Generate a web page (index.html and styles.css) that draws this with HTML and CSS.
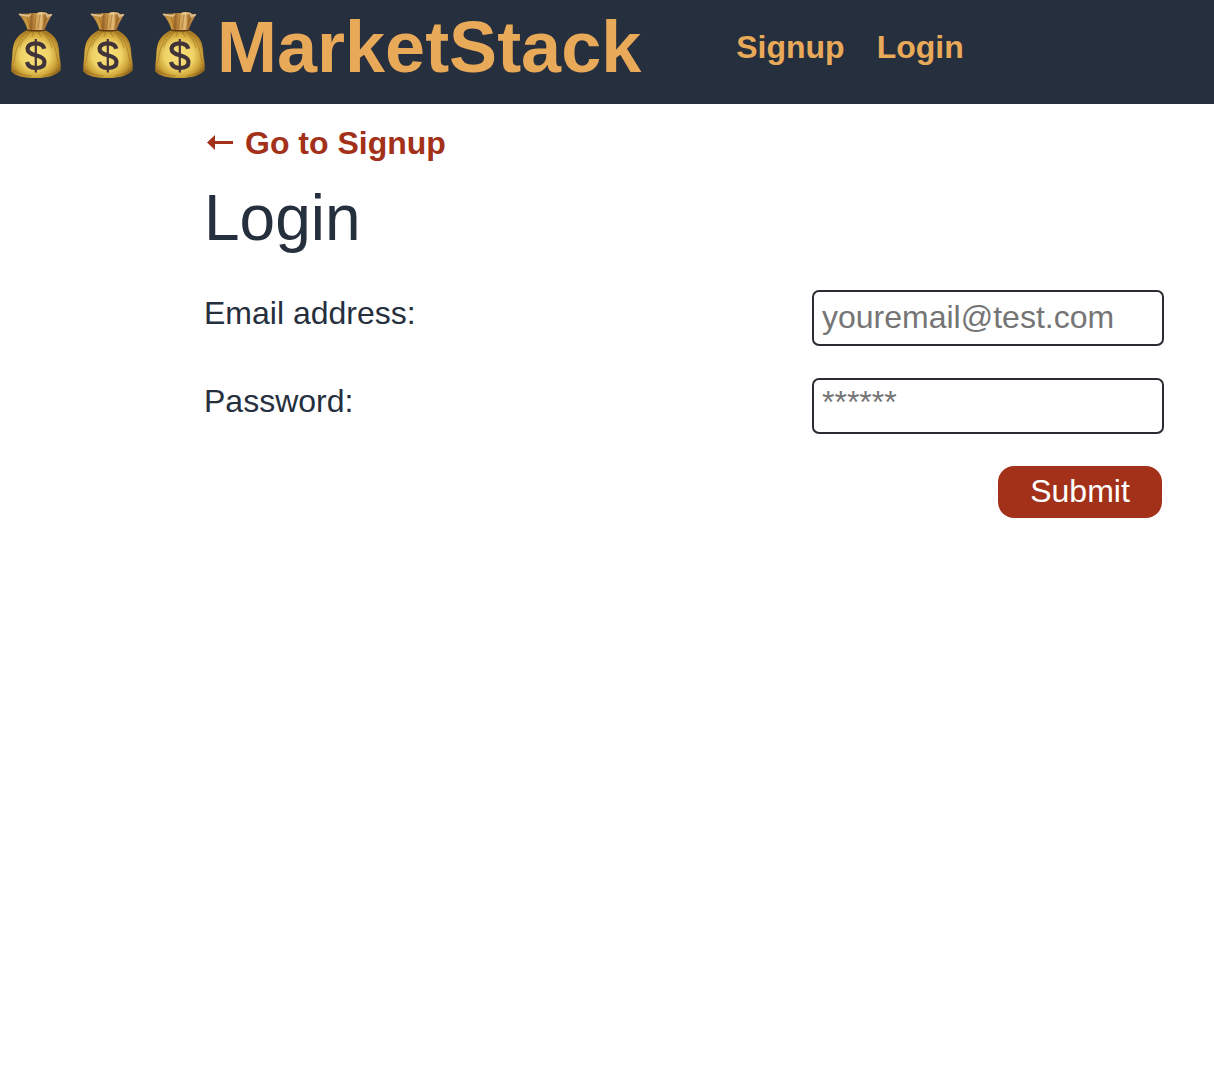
FILE: index.html
```html
<!DOCTYPE html>
<html lang="en">
<head>
<meta charset="utf-8">
<title>MarketStack</title>
<link rel="stylesheet" href="styles.css">
</head>
<body>
<svg class="defs" width="0" height="0" aria-hidden="true">
  <defs>
    <radialGradient id="sack" cx=".48" cy=".53" r=".58">
      <stop offset="0" stop-color="#f6df7c"/>
      <stop offset=".5" stop-color="#efd366"/>
      <stop offset=".76" stop-color="#d0a63b"/>
      <stop offset="1" stop-color="#93681c"/>
    </radialGradient>
    <linearGradient id="neck" x1="0" x2="1" y1="0" y2="0">
      <stop offset="0" stop-color="#b98a4d"/>
      <stop offset=".28" stop-color="#c9963b"/>
      <stop offset=".38" stop-color="#99662a"/>
      <stop offset=".52" stop-color="#d2a152"/>
      <stop offset=".68" stop-color="#e1bb75"/>
      <stop offset=".76" stop-color="#a8712d"/>
      <stop offset="1" stop-color="#d0a466"/>
    </linearGradient>
    <symbol id="bag" viewBox="0 0 72 78">
      <path d="M18.5 14C22 13 25 14.5 29 13.4C33 12 36 14.2 38 12.4C42 11.8 44 12 46 12.4C48 14.5 50 13.8 52.5 14C50 18 47.5 22 44.5 30H27.5C26 24 22.5 18 18.5 14Z" fill="url(#neck)"/>
      <path d="M19 14.3C24 16 26 15 29 16L31 14M38 13.5H45.5M46 13L47.5 16.5L51.5 14.5" fill="none" stroke="#e8ceaa" stroke-width="1.5" opacity=".8"/>
      <path d="M27 17L31 29M36 15L34.5 29M40 15L38 29M46.5 17L42 29" fill="none" stroke="#76481a" stroke-width=".9" opacity=".45"/>
      <path d="M27 30H45C51 33 56 37 58 44C59.5 50 59 54 60 59C61 64 61 67 60.5 70.5C56 75.5 48 78 36 78C24 78 16 76.5 11.3 71.5C11 67 11.3 64 12 59C12.5 54 12 50 13.5 45C15 38 21 33 27 30Z" fill="url(#sack)"/>
      <path d="M27 32C22 36 16 44 14 63M30 32C26 36 22 40 19.5 47M45 32C51 37 55 44 58 62M42 32C47 36 50 40 52 48M34 31L32 37M38 31L41 37M13 70C19 74 25 75.5 32 76M59 70C53 74 49 75 43 76" fill="none" stroke="#895b16" stroke-width="1.1" opacity=".4"/>
      <path d="M27 30.3Q36 31.4 45 30.3" fill="none" stroke="#5e3815" stroke-width="1.5"/>
      <path d="M35.8 39V72.5" fill="none" stroke="#40333a" stroke-width="2.2"/>
      <path d="M44.4 48.8C43.4 45 40.3 43.3 35.8 43.3C30.8 43.3 27.6 45.4 27.6 49C27.6 52.6 30.6 54 35.8 55.2C41.5 56.5 44.5 58 44.5 62C44.5 66 41 68 35.8 68C30.7 68 27.8 65.9 27 62" fill="none" stroke="#40333a" stroke-width="4.2"/>
    </symbol>
  </defs>
</svg>
<header class="header">
  <h1 class="brand">
    <svg class="bag" aria-hidden="true"><use href="#bag"/></svg>
    <svg class="bag" aria-hidden="true"><use href="#bag"/></svg>
    <svg class="bag" aria-hidden="true"><use href="#bag"/></svg>
    <span class="brand-name">MarketStack</span>
  </h1>
  <nav class="nav">
    <a class="nav-link" href="#signup">Signup</a>
    <a class="nav-link" href="#login">Login</a>
  </nav>
</header>
<main class="main">
  <a class="back" href="#signup">
    <svg class="arrow" viewBox="0 0 28 16" aria-hidden="true"><path d="M1 7.5L9 0V6H27V9H9V15Z"/></svg>
    <span>Go to Signup</span>
  </a>
  <h2 class="title">Login</h2>
  <form class="form">
    <div class="row">
      <label for="email">Email address:</label>
      <input class="field" id="email" type="email" placeholder="youremail@test.com">
    </div>
    <div class="row">
      <label for="password">Password:</label>
      <input class="field field-password" id="password" type="password" placeholder="******">
    </div>
    <div class="actions">
      <button class="submit" type="button">Submit</button>
    </div>
  </form>
</main>
</body>
</html>
```
FILE: styles.css
```css
* { box-sizing: border-box; }
body {
  margin: 0;
  background: #fff;
  color: #262f3e;
  font: 32px/36px "Liberation Sans", Arial, sans-serif;
}
a { text-decoration: none; }
.defs { display: block; }
.header {
  display: flex;
  align-items: flex-start;
  height: 104px;
  background: #262f3e;
  color: #e8a959;
}
.brand {
  display: flex;
  margin: 0;
  font-size: 72px;
  line-height: 94px;
}
.brand-name { padding-left: 1px; }
.bag { width: 72px; height: 78px; }
.nav {
  display: flex;
  gap: 32px;
  padding: 29px 0 0 95px;
}
.nav-link { color: #e8a959; font-weight: bold; }
.main { padding: 21px 50px 0 204px; }
.back {
  display: flex;
  align-items: center;
  gap: 11px;
  width: max-content;
  height: 36px;
  padding-left: 2px;
  color: #a3311a;
  font-weight: bold;
}
.arrow { width: 28px; height: 16px; fill: currentColor; }
.title {
  margin: 18px 0 33px;
  font-size: 64px;
  font-weight: normal;
  line-height: 78px;
}
.form { display: flex; flex-direction: column; gap: 32px; margin-top: 0; }
.row { display: flex; justify-content: space-between; height: 56px; }
.row label { padding-top: 5px; }
.field {
  width: 352px;
  height: 56px;
  padding: 0 8px 2px;
  border: 2px solid #292c33;
  border-radius: 7px;
  background: #fff;
  color: #262f3e;
  font: inherit;
}
.field-password { padding-bottom: 8px; }
.field::placeholder { color: #757575; opacity: 1; }
.actions { display: flex; justify-content: flex-end; padding-right: 2px; }
.submit {
  width: 164px;
  height: 52px;
  padding: 0 0 2px;
  border: 0;
  border-radius: 16px;
  background: #a3311a;
  color: #fff;
  font: inherit;
}
```
